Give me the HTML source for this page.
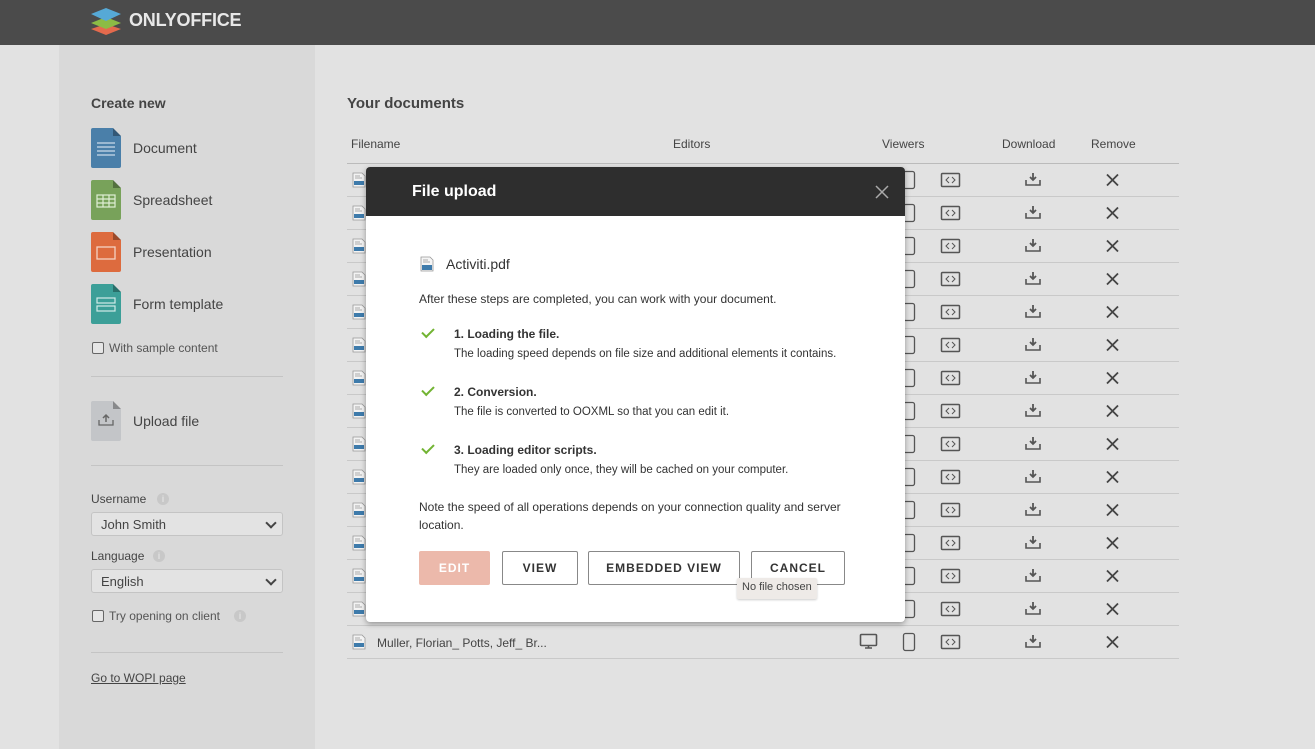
<!DOCTYPE html>
<html><head><meta charset="utf-8"><style>
*{box-sizing:border-box;margin:0;padding:0}
body{width:1315px;height:749px;overflow:hidden;background:#e2e2e2;font-family:"Liberation Sans",sans-serif;color:#333;position:relative}
.hdr{position:absolute;left:0;top:0;width:1315px;height:45px;background:#4b4b4b}
.logo{position:absolute;left:129px;top:10px;color:#e8e8e8;font-weight:bold;font-size:18px;letter-spacing:-0.2px}
.side{position:absolute;left:59px;top:45px;width:256px;height:704px;background:#d9d9d9}
.a{position:absolute;white-space:nowrap}
.ic{position:absolute;width:30px;height:40px;border-radius:2px}
.ic:after{content:"";position:absolute;right:0;top:0;border-style:solid;border-width:0 8px 8px 0;border-color:transparent #d9d9d9 rgba(0,0,0,.3) transparent}
.hr{position:absolute;left:91px;width:192px;height:1px;background:#c4c4c4}
.sel{position:absolute;left:91px;width:192px;height:24px;border:1px solid #c4c4c4;border-radius:3px;background:#e3e3e3;font-size:13px;padding:4px 9px;color:#444}
.sel:after{content:"";position:absolute;right:7px;top:6px;width:6px;height:6px;border-right:2px solid #444;border-bottom:2px solid #444;transform:rotate(45deg)}
.cb{position:absolute;width:12px;height:12px;border:1px solid #666;border-radius:2px;background:#e6e6e6}
.info{position:absolute;width:12px;height:12px;border-radius:50%;background:#c8c8c8;color:#e0e0e0;font-size:9px;text-align:center;line-height:12px;font-weight:bold}
.th{position:absolute;top:137px;font-size:12px;color:#444}
.modal{position:absolute;left:366px;top:167px;width:539px;height:455px;background:#fff;border-radius:4px;box-shadow:0 2px 6px rgba(0,0,0,.35);overflow:hidden}
.mh{height:49px;background:#2e2e2e;color:#fff;font-size:16px;font-weight:bold;padding:16px 0 0 46px}
.btn{position:absolute;top:384px;height:34px;border:1px solid #888;border-radius:2px;font-size:12px;font-weight:bold;letter-spacing:1px;text-align:center;line-height:32px;color:#333;background:#fff}
.st{position:absolute;left:88px;font-size:12px;font-weight:bold}
.sd{position:absolute;left:88px;font-size:11.5px;color:#333}
.ck{position:absolute;left:56px;width:12px;height:7px;border-left:2px solid #72b433;border-bottom:2px solid #72b433;transform:rotate(-45deg)}
</style></head><body>
<div class="hdr">
<svg style="position:absolute;left:90px;top:7px" width="32" height="29" viewBox="0 0 32 29"><path d="M16 17 L31 22 L16 28 L1 22Z" fill="#e46a4d"/><path d="M16 10 L31 16 L16 22 L1 16Z" fill="#8cbb45"/><path d="M16 1 L31 7 L16 14 L1 7Z" fill="#56a9d6"/></svg>
<div class="logo">ONLYOFFICE</div></div>
<div class="side"></div>
<div class="a" style="left:91px;top:95px;font-size:14px;font-weight:bold;color:#444">Create new</div>
<div class="ic" style="left:91px;top:128px;background:#4a7fa9"></div>
<svg class="a" style="left:97px;top:141px" width="18" height="16"><g stroke="#c9dbe9" stroke-width="1.2"><line x1="0" y1="2" x2="18" y2="2"/><line x1="0" y1="6" x2="18" y2="6"/><line x1="0" y1="10" x2="18" y2="10"/><line x1="0" y1="14" x2="18" y2="14"/></g></svg>
<div class="a" style="left:133px;top:140px;font-size:14px;color:#444">Document</div>
<div class="ic" style="left:91px;top:180px;background:#78a25a"></div>
<svg class="a" style="left:96px;top:194px" width="20" height="14"><rect x="1" y="1" width="18" height="12" fill="none" stroke="#dfeed4" stroke-width="1.2"/><g stroke="#dfeed4" stroke-width="1.2"><line x1="1" y1="5" x2="19" y2="5"/><line x1="1" y1="9" x2="19" y2="9"/><line x1="7" y1="1" x2="7" y2="13"/><line x1="13" y1="1" x2="13" y2="13"/></g></svg>
<div class="a" style="left:133px;top:192px;font-size:14px;color:#444">Spreadsheet</div>
<div class="ic" style="left:91px;top:232px;background:#dd6b3e"></div>
<svg class="a" style="left:96px;top:246px" width="20" height="14"><rect x="1" y="1" width="18" height="12" fill="none" stroke="#f4d3c4" stroke-width="1.3"/></svg>
<div class="a" style="left:133px;top:244px;font-size:14px;color:#444">Presentation</div>
<div class="ic" style="left:91px;top:284px;background:#3c9f98"></div>
<svg class="a" style="left:96px;top:297px" width="20" height="16"><rect x="1" y="1" width="18" height="5" fill="none" stroke="#d0ebe8" stroke-width="1.2"/><rect x="1" y="9" width="18" height="5" fill="none" stroke="#d0ebe8" stroke-width="1.2"/></svg>
<div class="a" style="left:133px;top:296px;font-size:14px;color:#444">Form template</div>
<div class="cb" style="left:92px;top:342px"></div>
<div class="a" style="left:109px;top:341px;font-size:12px;color:#555">With sample content</div>
<div class="hr" style="top:376px"></div>
<div class="ic" style="left:91px;top:401px;background:#c3c5c8"></div>
<svg class="a" style="left:98px;top:413px" width="16" height="14"><path d="M1 7v5h14V7" fill="none" stroke="#666" stroke-width="1.3"/><path d="M8 9V2M5 5l3-3 3 3" fill="none" stroke="#666" stroke-width="1.5"/></svg>
<div class="a" style="left:133px;top:413px;font-size:14px;color:#444">Upload file</div>
<div class="hr" style="top:465px"></div>
<div class="a" style="left:91px;top:492px;font-size:12px;color:#444">Username</div>
<div class="info" style="left:157px;top:493px">i</div>
<div class="sel" style="top:512px">John Smith</div>
<div class="a" style="left:91px;top:549px;font-size:12px;color:#444">Language</div>
<div class="info" style="left:153px;top:550px">i</div>
<div class="sel" style="top:569px">English</div>
<div class="cb" style="left:92px;top:610px"></div>
<div class="a" style="left:109px;top:609px;font-size:12px;color:#555">Try opening on client</div>
<div class="info" style="left:234px;top:610px">i</div>
<div class="hr" style="top:652px"></div>
<div class="a" style="left:91px;top:671px;font-size:12px;color:#444;text-decoration:underline">Go to WOPI page</div>

<div class="a" style="left:347px;top:95px;font-size:15px;font-weight:bold;color:#444">Your documents</div>
<div class="th" style="left:351px">Filename</div><div class="th" style="left:673px">Editors</div><div class="th" style="left:882px">Viewers</div><div class="th" style="left:1002px">Download</div><div class="th" style="left:1091px">Remove</div>
<div class="a" style="left:347px;top:163px;width:832px;height:1px;background:#bbb"></div>
<svg class="a" style="left:0;top:0" width="1315" height="749">
<defs>
<g id="r">
<path d="M353 -7h9l3 3v11h-12z" fill="#f3f3f3" stroke="#999" stroke-width="0.8"/><rect x="354" y="1" width="10" height="4" fill="#3e7bab"/><g stroke="#999" stroke-width="0.8"><line x1="355" y1="-4" x2="360" y2="-4"/><line x1="355" y1="-2" x2="362" y2="-2"/></g>
<rect x="903.5" y="-8.5" width="11" height="17" rx="2" fill="none" stroke="#555" stroke-width="1.3"/>
<rect x="941.5" y="-6.5" width="18" height="13" rx="1" fill="none" stroke="#555" stroke-width="1.5"/><path d="M949 -3l-3 3 3 3M952 -3l3 3-3 3" fill="none" stroke="#555" stroke-width="1"/>
<path d="M1026 0v5h14V0" fill="none" stroke="#555" stroke-width="1.6"/><path d="M1033 -7v7M1030 -3l3 3 3-3" fill="none" stroke="#555" stroke-width="1.8"/>
<path d="M1107 -5.5l11 11M1118 -5.5l-11 11" stroke="#444" stroke-width="1.8"/>
</g></defs>
<use href="#r" y="180"/><use href="#r" y="213"/><use href="#r" y="246"/><use href="#r" y="279"/><use href="#r" y="312"/><use href="#r" y="345"/><use href="#r" y="378"/><use href="#r" y="411"/><use href="#r" y="444"/><use href="#r" y="477"/><use href="#r" y="510"/><use href="#r" y="543"/><use href="#r" y="576"/><use href="#r" y="609"/><use href="#r" y="642"/>
<g transform="translate(0,642)"><rect x="860.5" y="-7.5" width="16" height="11" rx="1" fill="none" stroke="#555" stroke-width="1.6"/><path d="M865 6h7M868.5 3.5v2" stroke="#555" stroke-width="1.6"/></g>
<g fill="#c9c9c9"><rect x="347" y="196" width="832" height="1"/><rect x="347" y="229" width="832" height="1"/><rect x="347" y="262" width="832" height="1"/><rect x="347" y="295" width="832" height="1"/><rect x="347" y="328" width="832" height="1"/><rect x="347" y="361" width="832" height="1"/><rect x="347" y="394" width="832" height="1"/><rect x="347" y="427" width="832" height="1"/><rect x="347" y="460" width="832" height="1"/><rect x="347" y="493" width="832" height="1"/><rect x="347" y="526" width="832" height="1"/><rect x="347" y="559" width="832" height="1"/><rect x="347" y="592" width="832" height="1"/><rect x="347" y="625" width="832" height="1"/><rect x="347" y="658" width="832" height="1"/></g>
</svg>
<div class="a" style="left:377px;top:636px;font-size:12px;color:#444">Muller, Florian_ Potts, Jeff_ Br...</div>

<div class="modal">
<div class="mh">File upload</div>
<svg class="a" style="left:508px;top:17px" width="16" height="16"><path d="M2 2l12 12M14 2L2 14" stroke="#aaa" stroke-width="1.5"/></svg>
<svg class="a" style="left:54px;top:89px" width="14" height="16"><path d="M1 1h9l3 3v11H1z" fill="#f5f5f5" stroke="#999" stroke-width="0.8"/><rect x="2" y="9" width="10" height="5" fill="#3e7bab"/><g stroke="#999" stroke-width="0.8"><line x1="3" y1="4" x2="8" y2="4"/><line x1="3" y1="6" x2="10" y2="6"/></g></svg>
<div class="a" style="left:80px;top:89px;font-size:14px">Activiti.pdf</div>
<div class="a" style="left:53px;top:125px;font-size:12px">After these steps are completed, you can work with your document.</div>
<div class="ck" style="top:161px"></div><div class="st" style="top:160px">1. Loading the file.</div><div class="sd" style="top:181px">The loading speed depends on file size and additional elements it contains.</div>
<div class="ck" style="top:219px"></div><div class="st" style="top:218px">2. Conversion.</div><div class="sd" style="top:239px">The file is converted to OOXML so that you can edit it.</div>
<div class="ck" style="top:277px"></div><div class="st" style="top:276px">3. Loading editor scripts.</div><div class="sd" style="top:297px">They are loaded only once, they will be cached on your computer.</div>
<div class="a" style="left:53px;top:331px;font-size:12px;line-height:18px;white-space:normal;width:435px">Note the speed of all operations depends on your connection quality and server location.</div>
<div class="btn" style="left:53px;width:71px;background:#ecb9ab;border-color:#ecb9ab;color:#fff">EDIT</div>
<div class="btn" style="left:136px;width:76px">VIEW</div>
<div class="btn" style="left:222px;width:152px">EMBEDDED VIEW</div>
<div class="btn" style="left:385px;width:94px">CANCEL</div>
<div class="a" style="left:371px;top:411px;height:21px;padding:3px 5px;background:#eeeae7;border-radius:2px;font-size:11px;color:#444;box-shadow:0 1px 2px rgba(0,0,0,.2)">No file chosen</div>
</div>
</body></html>
